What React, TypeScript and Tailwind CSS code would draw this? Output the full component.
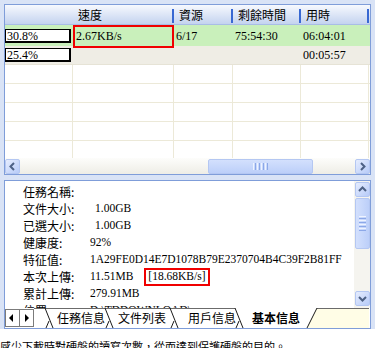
import React from 'react';

type Dir = 'left' | 'right' | 'up' | 'down';

const Chevron: React.FC<{ dir: Dir }> = ({ dir }) => {
  const pts = {
    left: '8,3 4.5,6.5 8,10',
    right: '5,3 8.5,6.5 5,10',
    up: '3,8 6.5,4.5 10,8',
    down: '3,5 6.5,8.5 10,5',
  }[dir];
  return (
    <svg width="13" height="13" viewBox="0 0 13 13">
      <polyline points={pts} fill="none" stroke="#4d6185" strokeWidth="2" />
    </svg>
  );
};

const ScrollBtn: React.FC<{ dir: Dir }> = ({ dir }) => (
  <div className="w-[15px] h-[15px] shrink-0 rounded-[2px] border border-[#b4c7f2] bg-gradient-to-br from-[#e6edfe] to-[#b7cbf8] flex items-center justify-center">
    <Chevron dir={dir} />
  </div>
);

const ProgressBox: React.FC<{ text: string; top: string }> = ({ text, top }) => (
  <div className={`${top} w-[66px] h-[14px] bg-white border-l border-t border-r-2 border-b-2 border-black flex items-center pl-[1px] text-[12px] leading-none`}>
    {text}
  </div>
);

const HeaderCell: React.FC<{ w: string; label: string }> = ({ w, label }) => (
  <div className={`${w} h-full flex items-center`}>
    <span className="flex-1 pl-[5px] text-[12px] font-['Noto_Sans_CJK_TC',sans-serif]">{label}</span>
    <span className="w-[2px] h-[14px] bg-[#3868d2] mt-[2px]" />
  </div>
);

const EmptyRow: React.FC = () => (
  <div className="h-[19px] shrink-0 flex border-b border-[#ece9d8] bg-white">
    <div className="w-[68px] border-r border-[#ece9d8]" />
    <div className="w-[101px] border-r border-[#ece9d8]" />
    <div className="w-[59px] border-r border-[#ece9d8]" />
    <div className="w-[68px] border-r border-[#ece9d8]" />
    <div className="w-[68px] border-r border-[#ece9d8]" />
  </div>
);

const info = [
  { label: '任務名稱:', value: '' },
  { label: '文件大小:', value: '1.00GB', indent: true },
  { label: '已選大小:', value: '1.00GB', indent: true },
  { label: '健康度:', value: '92%' },
  { label: '特征值:', value: '1A29FE0D14E7D1078B79E2370704B4C39F2B81FF' },
  { label: '本次上傳:', value: '11.51MB', extra: '[18.68KB/s]' },
  { label: '累計上傳:', value: '279.91MB' },
  { label: '位置:', value: 'D:\\TDDOWNLOAD\\' },
];

const TabBar: React.FC = () => (
  <div className="relative h-[20px] shrink-0 bg-white">
    <svg className="absolute inset-0" width="364" height="20" viewBox="0 0 364 20">
      <polygon points="312,0 364,0 364,20 302,20" fill="#fffde6" />
      <line x1="29" y1="0.5" x2="230" y2="0.5" stroke="#6b6b6b" />
      <line x1="312" y1="0.5" x2="364" y2="0.5" stroke="#6b6b6b" />
      <rect x="0.5" y="1.5" width="14" height="17" fill="#fff" stroke="#7b7b7b" />
      <rect x="14.5" y="1.5" width="14" height="17" fill="#fff" stroke="#7b7b7b" />
      <polygon points="8,6 4,10 8,14" fill="#000" />
      <polygon points="20,6 24,10 20,14" fill="#000" />
      {[40, 100, 165, 230].map((l) => (
        <g key={l} stroke="#1a1a1a" strokeWidth="1">
          <line x1={l} y1="0" x2={l + 8} y2="20" />
          <line x1={l + 1} y1="20" x2={l + 4} y2="13" />
        </g>
      ))}
      <line x1="302" y1="20" x2="312" y2="0" stroke="#1a1a1a" />
    </svg>
    <div className="relative flex items-center h-full pl-[52px] text-[12px] leading-none font-['Noto_Sans_CJK_TC',sans-serif] text-black">
      <span className="w-[48px]">任務信息</span>
      <span className="w-[48px] ml-[13px]">文件列表</span>
      <span className="w-[48px] ml-[22px]">用戶信息</span>
      <span className="w-[48px] ml-[16px] font-bold">基本信息</span>
    </div>
  </div>
);

export default function App() {
  return (
    <div className="w-[375px] h-[348px] overflow-hidden bg-[#d9e3f6] flex flex-col font-['Liberation_Serif','Noto_Sans_CJK_TC',serif] text-black">
      <div className="pt-[4px] pl-[4px] pr-[4px] flex flex-col">
        {/* list view */}
        <div className="w-[367px] h-[171px] border border-[#7f9dd9] bg-white flex flex-col">
          <div className="h-[20px] shrink-0 flex border-b border-[#a9bde6] bg-gradient-to-b from-[#f7f9fe] to-[#c4d3ef]">
            <div className="w-[68px]" />
            <HeaderCell w="w-[101px]" label="速度" />
            <HeaderCell w="w-[59px]" label="資源" />
            <HeaderCell w="w-[68px]" label="剩餘時間" />
            <HeaderCell w="w-[68px]" label="用時" />
          </div>
          <div className="flex-1 min-h-0 overflow-hidden flex flex-col text-[12px]">
            <div className="h-[21px] shrink-0 flex bg-[#c9f0bb]">
              <div className="w-[68px]">
                <ProgressBox text="30.8%" top="mt-[4px]" />
              </div>
              <div className="w-[101px] relative flex items-center pl-[3px]">
                <div className="absolute inset-x-0 top-0 -bottom-[2px] border-2 border-[#f00000]" />
                2.67KB/s
              </div>
              <div className="w-[59px] flex items-center pl-[2px]">6/17</div>
              <div className="w-[68px] flex items-center pl-[2px]">75:54:30</div>
              <div className="w-[68px] flex items-center pl-[2px]">06:04:01</div>
            </div>
            <div className="h-[19px] shrink-0 flex bg-[#efede5] border-b border-[#e6e3d6]">
              <div className="w-[68px]">
                <ProgressBox text="25.4%" top="mt-[2px]" />
              </div>
              <div className="w-[101px]" />
              <div className="w-[59px]" />
              <div className="w-[68px]" />
              <div className="w-[68px] flex items-center pl-[2px]">00:05:57</div>
            </div>
            <EmptyRow />
            <EmptyRow />
            <EmptyRow />
            <EmptyRow />
            <EmptyRow />
          </div>
          <div className="h-[16px] shrink-0 flex items-center bg-gradient-to-b from-[#fdfdfb] to-[#eeede6]">
            <ScrollBtn dir="left" />
            <div className="ml-[188px] w-[105px] h-[15px] rounded-[2px] border border-[#b4c7f2] bg-gradient-to-b from-[#d3e0fd] to-[#bccff9] flex items-center justify-center gap-[1px]">
              <span className="w-[1px] h-[7px] bg-[#eef3ff]" />
              <span className="w-[1px] h-[7px] bg-[#8ca8e8]" />
              <span className="w-[1px] h-[7px] bg-[#eef3ff]" />
              <span className="w-[1px] h-[7px] bg-[#8ca8e8]" />
              <span className="w-[1px] h-[7px] bg-[#eef3ff]" />
              <span className="w-[1px] h-[7px] bg-[#8ca8e8]" />
              <span className="w-[1px] h-[7px] bg-[#eef3ff]" />
              <span className="w-[1px] h-[7px] bg-[#8ca8e8]" />
            </div>
            <div className="flex-1" />
            <ScrollBtn dir="right" />
          </div>
        </div>

        {/* info panel */}
        <div className="mt-[5px] w-[367px] h-[149px] border border-[#7f9dd9] bg-white flex flex-col">
          <div className="flex-1 min-h-0 flex">
            <div className="flex-1 min-w-0 overflow-hidden pt-[2px] pl-[18px]">
              {info.map((r) => (
                <div key={r.label} className="h-[17px] flex items-center whitespace-nowrap">
                  <span className="w-[67px] shrink-0 text-[12px] font-['Noto_Sans_CJK_TC',sans-serif]">{r.label}</span>
                  <span className={`text-[11.5px] ${r.indent ? 'ml-[5px]' : ''}`}>{r.value}</span>
                  {r.extra && (
                    <span className="ml-[11px] h-[18px] px-[2px] border-2 border-[#f00000] flex items-center text-[11.5px]">
                      {r.extra}
                    </span>
                  )}
                </div>
              ))}
            </div>
            <div className="w-[16px] shrink-0 flex flex-col items-center pt-[1px] pb-[2px] bg-[#f5f4ef]">
              <ScrollBtn dir="up" />
              <div className="mt-[1px] w-[15px] h-[51px] rounded-[2px] border border-[#b4c7f2] bg-gradient-to-r from-[#d3e0fd] to-[#bccff9] flex flex-col items-center justify-center gap-[1px]">
                <span className="w-[7px] h-[1px] bg-[#eef3ff]" />
                <span className="w-[7px] h-[1px] bg-[#8ca8e8]" />
                <span className="w-[7px] h-[1px] bg-[#eef3ff]" />
                <span className="w-[7px] h-[1px] bg-[#8ca8e8]" />
                <span className="w-[7px] h-[1px] bg-[#eef3ff]" />
                <span className="w-[7px] h-[1px] bg-[#8ca8e8]" />
                <span className="w-[7px] h-[1px] bg-[#eef3ff]" />
                <span className="w-[7px] h-[1px] bg-[#8ca8e8]" />
              </div>
              <div className="flex-1" />
              <ScrollBtn dir="down" />
            </div>
          </div>
          <TabBar />
        </div>
      </div>

      <div className="flex-1 bg-white pt-[10px] whitespace-nowrap">
        <p className="text-[11px] leading-[14px] font-['Noto_Sans_CJK_TC',sans-serif]">
          感少下載時對硬盤的讀寫次數，從而達到保護硬盤的目的。
        </p>
      </div>
    </div>
  );
}
